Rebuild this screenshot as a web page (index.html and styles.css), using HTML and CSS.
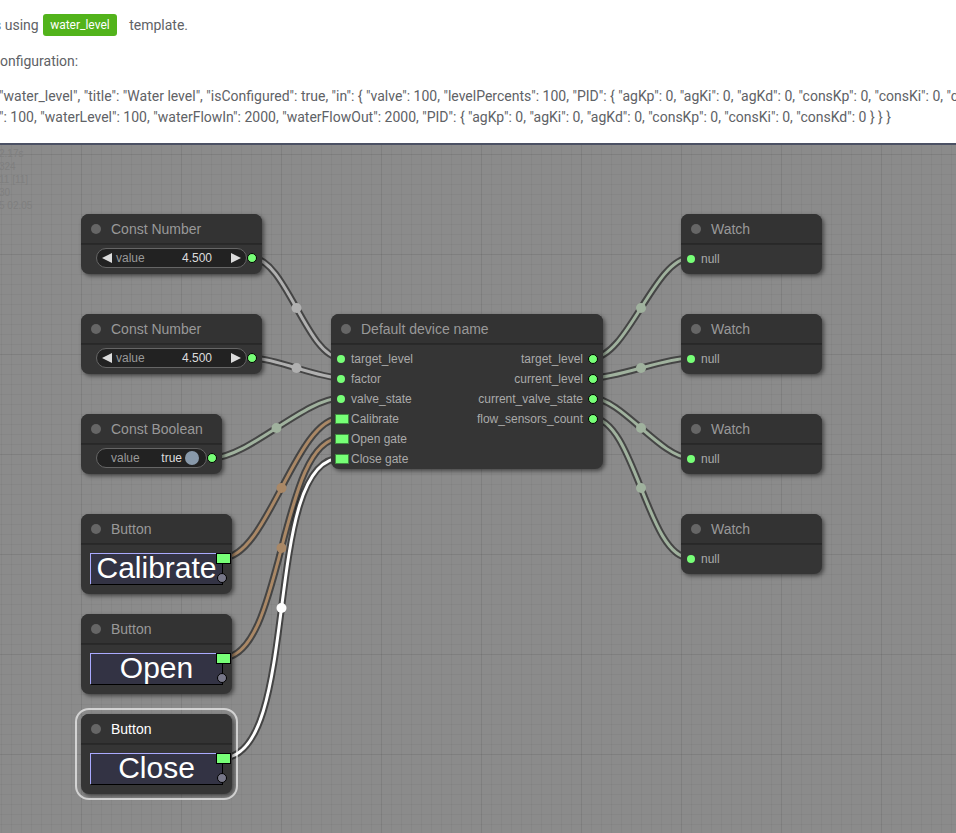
FILE: index.html
```html
<!DOCTYPE html>
<html>
<head>
<meta charset="utf-8">
<title>Device template</title>
<link rel="stylesheet" href="styles.css">
</head>
<body>
<div class="info">
  <p class="l1">s using <span class="tag">water_level</span> template.</p>
  <p class="l2">onfiguration:</p>
  <p class="json">"water_level", "title": "Water level", "isConfigured": true, "in": { "valve": 100, "levelPercents": 100, "PID": { "agKp": 0, "agKi": 0, "agKd": 0, "consKp": 0, "consKi": 0, "consKd": 0 } }, "out": { "valve"<br>": 100, "waterLevel": 100, "waterFlowIn": 2000, "waterFlowOut": 2000, "PID": { "agKp": 0, "agKi": 0, "agKd": 0, "consKp": 0, "consKi": 0, "consKd": 0 } } }</p>
</div>
<div class="canvas">
  <div class="stats">2.17s<br>324<br>11 [11]<br>30<br>5 02.05</div>
  <svg class="links" width="956" height="688" viewBox="0 145 956 688">
    <g class="num">
      <path class="lb" d="M252 258 C285.5 258 307.5 358 341 358"/>
      <path class="lc" d="M252 258 C285.5 258 307.5 358 341 358"/>
      <circle cx="296.5" cy="308" r="5"/>
      <path class="lb" d="M252 358 C274.8 358 318.2 378 341 378"/>
      <path class="lc" d="M252 358 C274.8 358 318.2 378 341 378"/>
      <circle cx="296.5" cy="368" r="5"/>
    </g>
    <g class="gen">
      <path class="lb" d="M212 458 C247.6 458 305.4 398 341 398"/>
      <path class="lc" d="M212 458 C247.6 458 305.4 398 341 398"/>
      <circle cx="276.5" cy="428" r="5"/>
      <path class="lb" d="M592 358 C627 358 655 258 690 258"/>
      <path class="lc" d="M592 358 C627 358 655 258 690 258"/>
      <circle cx="641" cy="308" r="5"/>
      <path class="lb" d="M592 378 C617 378 665 358 690 358"/>
      <path class="lc" d="M592 378 C617 378 665 358 690 358"/>
      <circle cx="641" cy="368" r="5"/>
      <path class="lb" d="M592 398 C620.7 398 661.3 458 690 458"/>
      <path class="lc" d="M592 398 C620.7 398 661.3 458 690 458"/>
      <circle cx="641" cy="428" r="5"/>
      <path class="lb" d="M592 418 C634.7 418 647.3 558 690 558"/>
      <path class="lc" d="M592 418 C634.7 418 647.3 558 690 558"/>
      <circle cx="641" cy="488" r="5"/>
    </g>
    <g class="evt">
      <path class="lb" d="M222 558 C267.9 558 295.1 418 341 418"/>
      <path class="lc" d="M222 558 C267.9 558 295.1 418 341 418"/>
      <circle cx="281.5" cy="488" r="5"/>
      <path class="lb" d="M222 658 C284.5 658 278.5 438 341 438"/>
      <path class="lc" d="M222 658 C284.5 658 278.5 438 341 438"/>
      <circle cx="281.5" cy="548" r="5"/>
    </g>
    <g class="sel">
      <path class="lb" d="M222 758 C302.7 758 260.3 458 341 458"/>
      <path class="lc" d="M222 758 C302.7 758 260.3 458 341 458"/>
      <circle cx="281.5" cy="608" r="5"/>
    </g>
  </svg>

  <div class="node n-cn1">
    <div class="title"><span class="dot"></span>Const Number</div>
    <div class="body wrow">
      <div class="wnum"><i class="tri tl"></i><span class="wl">value</span><span class="wv">4.500</span><i class="tri tr"></i></div>
      <span class="slot out"></span>
    </div>
  </div>

  <div class="node n-cn2">
    <div class="title"><span class="dot"></span>Const Number</div>
    <div class="body wrow">
      <div class="wnum"><i class="tri tl"></i><span class="wl">value</span><span class="wv">4.500</span><i class="tri tr"></i></div>
      <span class="slot out"></span>
    </div>
  </div>

  <div class="node n-cb">
    <div class="title"><span class="dot"></span>Const Boolean</div>
    <div class="body wrow">
      <div class="wtog"><span class="wl">value</span><span class="wv">true</span><span class="knob"></span></div>
      <span class="slot out"></span>
    </div>
  </div>

  <div class="node n-b1">
    <div class="title"><span class="dot"></span>Button</div>
    <div class="body bbody">
      <div class="btn">Calibrate</div>
      <span class="evout"></span>
      <span class="offslot"></span>
    </div>
  </div>

  <div class="node n-b2">
    <div class="title"><span class="dot"></span>Button</div>
    <div class="body bbody">
      <div class="btn">Open</div>
      <span class="evout"></span>
      <span class="offslot"></span>
    </div>
  </div>

  <div class="node n-b3 selected">
    <div class="title"><span class="dot"></span>Button</div>
    <div class="body bbody">
      <div class="btn">Close</div>
      <span class="evout"></span>
      <span class="offslot"></span>
    </div>
  </div>

  <div class="node n-dev">
    <div class="title"><span class="dot"></span>Default device name</div>
    <div class="body dbody">
      <div class="ins">
        <div class="row"><span class="slot in"></span>target_level</div>
        <div class="row"><span class="slot in"></span>factor</div>
        <div class="row"><span class="slot in"></span>valve_state</div>
        <div class="row"><span class="ev"></span>Calibrate</div>
        <div class="row"><span class="ev"></span>Open gate</div>
        <div class="row"><span class="ev"></span>Close gate</div>
      </div>
      <div class="outs">
        <div class="row">target_level<span class="slot out"></span></div>
        <div class="row">current_level<span class="slot out"></span></div>
        <div class="row">current_valve_state<span class="slot out"></span></div>
        <div class="row">flow_sensors_count<span class="slot out"></span></div>
      </div>
    </div>
  </div>

  <div class="node n-w1">
    <div class="title"><span class="dot"></span>Watch</div>
    <div class="body wbody"><div class="row"><span class="slot in"></span>null</div></div>
  </div>
  <div class="node n-w2">
    <div class="title"><span class="dot"></span>Watch</div>
    <div class="body wbody"><div class="row"><span class="slot in"></span>null</div></div>
  </div>
  <div class="node n-w3">
    <div class="title"><span class="dot"></span>Watch</div>
    <div class="body wbody"><div class="row"><span class="slot in"></span>null</div></div>
  </div>
  <div class="node n-w4">
    <div class="title"><span class="dot"></span>Watch</div>
    <div class="body wbody"><div class="row"><span class="slot in"></span>null</div></div>
  </div>
</div>
</body>
</html>
```
FILE: styles.css
```css
* { box-sizing: border-box; }
html, body { margin: 0; padding: 0; }
body {
  width: 956px;
  height: 833px;
  overflow: hidden;
  background: #fff;
  font-family: Roboto, "Liberation Sans", sans-serif;
}

/* ---------- top info ---------- */
.info {
  height: 145px;
  border-bottom: 2px solid #4b5164;
  color: #606266;
  font-size: 14px;
  padding-top: 14px;
  white-space: nowrap;
  overflow: hidden;
}
.info p { margin: 0; }
.l1 { line-height: 22px; margin-left: -6px !important; }
.tag {
  display: inline-block;
  vertical-align: top;
  height: 22px;
  line-height: 22px;
  padding: 0 7px;
  margin: 0 9px 0 1px;
  background: #52b31b;
  color: #fff;
  font-size: 12px;
  border-radius: 3px;
}
.l2 { line-height: 20px; margin-top: 15px !important; }
.json { line-height: 21px; margin-top: 15px !important; margin-left: -1px !important; }

/* ---------- canvas ---------- */
.canvas {
  position: relative;
  height: 688px;
  overflow: hidden;
  background-color: #8b8b8b;
  background-image:
    linear-gradient(90deg, rgba(0,0,0,0.05) 1px, transparent 1px),
    linear-gradient(rgba(0,0,0,0.05) 1px, transparent 1px),
    linear-gradient(90deg, rgba(0,0,0,0.04) 1px, transparent 1px),
    linear-gradient(rgba(0,0,0,0.04) 1px, transparent 1px);
  background-size: 100px 100px, 100px 100px, 10px 10px, 10px 10px;
  background-position: 81px 0, 0 9px, 1px 0, 0 9px;
  font-family: "Liberation Sans", Arial, sans-serif;
}
.stats {
  position: absolute;
  left: -1px;
  top: 2px;
  font-size: 10px;
  line-height: 13px;
  color: #7f7f7f;
}
.links { position: absolute; left: 0; top: 0; }
.lb { fill: none; stroke: rgba(0,0,0,0.5); stroke-width: 7; }
.lc { fill: none; stroke-width: 3; }
.num .lc { stroke: #b0b0b0; } .num circle { fill: #b0b0b0; }
.gen .lc { stroke: #a0b29e; } .gen circle { fill: #a0b29e; }
.evt .lc { stroke: #aa8866; } .evt circle { fill: #aa8866; }
.sel .lc { stroke: #fff; } .sel circle { fill: #fff; }

/* ---------- nodes ---------- */
.node {
  position: absolute;
  background: #353535;
  border-radius: 8px;
  box-shadow: 2px 2px 4px rgba(0,0,0,0.5);
}
.n-cn1 { left: 81px; top: 69px; width: 181px; }
.n-cn2 { left: 81px; top: 169px; width: 181px; }
.n-cb  { left: 81px; top: 269px; width: 141px; }
.n-b1  { left: 81px; top: 369px; width: 151px; }
.n-b2  { left: 81px; top: 469px; width: 151px; }
.n-b3  { left: 81px; top: 569px; width: 151px; }
.n-dev { left: 331px; top: 169px; width: 272px; }
.n-w1  { left: 681px; top: 69px; width: 141px; }
.n-w2  { left: 681px; top: 169px; width: 141px; }
.n-w3  { left: 681px; top: 269px; width: 141px; }
.n-w4  { left: 681px; top: 369px; width: 141px; }

.selected::before {
  content: "";
  position: absolute;
  left: -6px; top: -6px; right: -6px; bottom: -6px;
  border: 2px solid rgba(255,255,255,0.62);
  border-radius: 14px;
}

.title {
  height: 30px;
  display: flex;
  align-items: center;
  padding-left: 10px;
  background: #333;
  border-radius: 8px 8px 0 0;
  color: #999;
  font-size: 14px;
  line-height: 30px;
  box-shadow: inset 0 -1px 0 rgba(0,0,0,0.2);
}
.selected .title { color: #fff; }
.dot {
  width: 10px;
  height: 10px;
  border-radius: 50%;
  background: #666;
  margin-right: 10px;
}
.body {
  position: relative;
  border-radius: 0 0 8px 8px;
  box-shadow: inset 0 1px 0 rgba(0,0,0,0.2);
}

/* slots */
.slot { display: block; flex: none; border-radius: 50%; background: #7f7; }
.slot.out { width: 10px; height: 10px; border: 1px solid #000; }
.slot.in { width: 8px; height: 8px; }

/* widget rows */
.wrow {
  height: 30px;
  display: flex;
  align-items: flex-start;
  padding: 4px 5px 0 15px;
}
.wrow .slot.out { margin-top: 5px; }
.wnum, .wtog {
  flex: 1;
  height: 20px;
  display: flex;
  align-items: center;
  background: #222;
  border: 1px solid #666;
  border-radius: 10px;
  font-size: 12px;
}
.wnum { padding: 0 5px; }
.wl { flex: 1; color: #999; }
.wv { color: #ddd; }
.wnum .wl { margin-left: 4px; }
.wnum .wv { margin-right: 19px; }
.tri { display: block; width: 0; height: 0; border-top: 5px solid transparent; border-bottom: 5px solid transparent; }
.tl { border-right: 10px solid #ddd; }
.tr { border-left: 10px solid #ddd; }
.wtog { padding: 0 7px 0 14px; }
.knob { width: 14px; height: 14px; border-radius: 50%; background: #8899aa; margin-left: 3px; }

/* button nodes */
.bbody { height: 50px; padding: 10px; }
.btn {
  margin: -1px 0 0 -1px;
  width: 132px;
  height: 31px;
  border-top: 1px solid #aaf;
  border-left: 1px solid #aaf;
  background: #334;
  box-shadow: 1px 1px 0 #000;
  color: #fff;
  font-size: 30px;
  line-height: 27px;
  text-align: center;
  white-space: nowrap;
}
.evout {
  position: absolute;
  left: 135px;
  top: 9px;
  width: 15px;
  height: 11px;
  background: #7f7;
  border: 1px solid #000;
}
.offslot {
  position: absolute;
  left: 136px;
  top: 29px;
  width: 10px;
  height: 10px;
  border-radius: 50%;
  background: #778;
  border: 1px solid #000;
}

/* device node */
.dbody {
  height: 125px;
  display: flex;
  justify-content: space-between;
  padding-top: 5px;
}
.row {
  height: 20px;
  display: flex;
  align-items: center;
  font-size: 12px;
  color: #aaa;
  white-space: nowrap;
}
.ins .row { padding-left: 6px; }
.ins .slot.in { margin-right: 6px; }
.ev {
  width: 14px;
  height: 10px;
  margin: 0 2px 0 -2px;
  background: #7f7;
  border: 1px solid rgba(0,0,0,0.45);
}
.outs .row { justify-content: flex-end; padding-right: 5px; }
.outs .slot.out { margin-left: 5px; }

/* watch nodes */
.wbody { height: 30px; padding: 5px 0 0 6px; }
.wbody .slot.in { margin-right: 6px; }
```
